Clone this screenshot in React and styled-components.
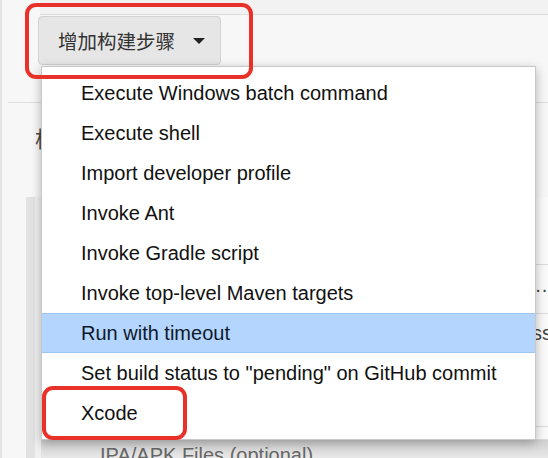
import React from 'react';
import styled, { createGlobalStyle } from 'styled-components';

const GlobalStyle = createGlobalStyle`
  html, body {
    margin: 0;
    padding: 0;
    background: #f7f7f7;
    font-family: 'Liberation Sans', Helvetica, Arial, sans-serif;
  }
`;

const Page = styled.div`
  position: relative;
  width: 548px;
  height: 458px;
  overflow: hidden;
  background: #f7f7f7;
  border-left: 2px solid #e4e4e4;
  box-sizing: border-box;
`;

const TopStrip = styled.div`
  height: 14px;
  margin-left: 38px;
  background: #f2f2f2;
  border-bottom: 1px solid #dcdcdc;
`;

const ButtonRow = styled.div`
  display: flex;
  height: 88px;
  padding: 1px 0 0 30px;
  box-sizing: border-box;
  border-bottom: 1px solid #dedede;
  margin-left: 6px;
`;

const AddButton = styled.button`
  display: flex;
  align-items: center;
  gap: 18px;
  width: 183px;
  height: 49px;
  padding: 0 0 0 19px;
  box-sizing: border-box;
  background: #e6e6e6;
  border: 1px solid #d2d2d2;
  border-radius: 4px;
  color: #333;
  font-family: 'Noto Sans CJK SC', sans-serif;
  font-size: 19.5px;
  cursor: pointer;
`;

const Caret = styled.span`
  width: 0;
  height: 0;
  border-left: 6px solid transparent;
  border-right: 6px solid transparent;
  border-top: 6px solid #222;
`;

const Heading = styled.div`
  height: 94px;
  padding: 18px 0 0 33px;
  box-sizing: border-box;
  font-size: 22px;
  color: #444;
  font-family: 'Noto Sans CJK SC', sans-serif;
`;

const Panel = styled.div`
  display: flex;
  margin-left: 24px;
`;

const SideBar = styled.div`
  width: 9px;
  background: #e2e2e2;
  border-right: 6px solid #f0f0f0;
`;

const PanelBody = styled.div`
  flex: 1;
  display: flex;
  flex-direction: column;
  background: #fafafa;
`;

const PanelRow = styled.div`
  height: ${(p) => p.$h}px;
  border-bottom: 1px solid #dcdcdc;
  box-sizing: border-box;
  display: flex;
  align-items: center;
  justify-content: flex-end;
  font-size: 20px;
  color: #444;
  overflow: hidden;
  white-space: nowrap;
`;

const CutText = styled.span`
  align-self: flex-start;
  margin-top: 8px;
  margin-right: -4px;
`;

const FileLabel = styled.div`
  height: 40px;
  padding: 4px 0 0 59px;
  box-sizing: border-box;
  font-size: 20px;
  color: #666;
  background: linear-gradient(#d0d0d0, #efefef 60%);
  position: relative;
  &::after {
    content: '';
    position: absolute;
    left: 227px;
    top: 0;
    width: 1px;
    height: 100%;
    background: #d0d0d0;
  }
`;

const Menu = styled.ul`
  position: absolute;
  left: 39px;
  top: 66px;
  width: 495px;
  margin: 0;
  padding: 6px 0;
  list-style: none;
  background: #fff;
  border: 1px solid #c8c8c8;
  box-shadow: 0 3px 10px rgba(0, 0, 0, 0.28);
  box-sizing: border-box;
`;

const MenuItem = styled.li`
  height: 40px;
  display: flex;
  align-items: center;
  padding-left: 39px;
  box-sizing: border-box;
  font-size: 20px;
  color: ${(p) => (p.$active ? '#0d1a2a' : '#111')};
  background: ${(p) => (p.$active ? '#b4d5fe' : 'transparent')};
  border-top: 1px solid ${(p) => (p.$active ? '#a2c6f4' : 'transparent')};
  border-bottom: 1px solid ${(p) => (p.$active ? '#a2c6f4' : 'transparent')};
`;

const Callout = styled.div`
  position: absolute;
  left: ${(p) => p.$x}px;
  top: ${(p) => p.$y}px;
  width: ${(p) => p.$w}px;
  height: ${(p) => p.$h}px;
  border: 4px solid #e83229;
  border-radius: 11px;
  box-sizing: border-box;
  pointer-events: none;
`;

const items = [
  'Execute Windows batch command',
  'Execute shell',
  'Import developer profile',
  'Invoke Ant',
  'Invoke Gradle script',
  'Invoke top-level Maven targets',
  'Run with timeout',
  'Set build status to "pending" on GitHub commit',
  'Xcode',
];

const App = () => (
  <>
    <GlobalStyle />
    <Page>
      <TopStrip />
      <ButtonRow>
        <AddButton>
          增加构建步骤
          <Caret />
        </AddButton>
      </ButtonRow>
      <Heading>构建后操作</Heading>
      <Panel>
        <SideBar />
        <PanelBody>
          <PanelRow $h={68} />
          <PanelRow $h={49}>··</PanelRow>
          <PanelRow $h={113}>
            <CutText>ss</CutText>
          </PanelRow>
          <PanelRow $h={13} />
          <FileLabel>IPA/APK Files (optional)</FileLabel>
        </PanelBody>
      </Panel>
      <Menu>
        {items.map((t) => (
          <MenuItem key={t} $active={t === 'Run with timeout'}>
            {t}
          </MenuItem>
        ))}
      </Menu>
      <Callout $x={23} $y={3} $w={228} $h={76} />
      <Callout $x={40} $y={386} $w={145} $h={54} />
    </Page>
  </>
);

export default App;
